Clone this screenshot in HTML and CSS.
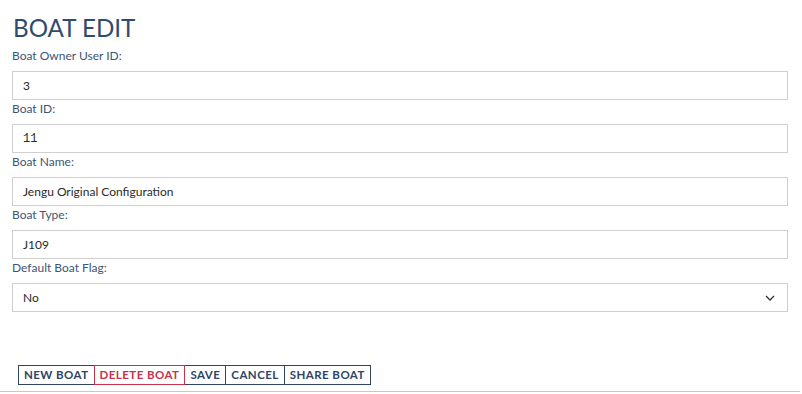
FILE: index.html
```html
<!DOCTYPE html>
<html>
<head>
<meta charset="utf-8">
<link rel="stylesheet" href="styles.css">
</head>
<body>
<div class="page">
  <h1 class="title">BOAT EDIT</h1>
  <form class="form">
    <label class="lbl">Boat Owner User ID:</label>
    <div class="field">3</div>
    <label class="lbl">Boat ID:</label>
    <div class="field mono">11</div>
    <label class="lbl">Boat Name:</label>
    <div class="field">Jengu Original Configuration</div>
    <label class="lbl">Boat Type:</label>
    <div class="field">J109</div>
    <label class="lbl">Default Boat Flag:</label>
    <div class="field select"><span>No</span>
      <svg class="chev" width="10" height="6" viewBox="0 0 10 6"><path d="M1 1 L5 5 L9 1" fill="none" stroke="#333" stroke-width="1.3"/></svg>
    </div>
  </form>
  <div class="actions">
    <button class="btn">NEW BOAT</button><button class="btn danger">DELETE BOAT</button><button class="btn">SAVE</button><button class="btn">CANCEL</button><button class="btn">SHARE BOAT</button>
  </div>
</div>
</body>
</html>
```
FILE: styles.css
```css
html, body { margin: 0; padding: 0; background: #fff; }
body { font-family: Lato, "Open Sans", sans-serif; }
.page { width: 802px; height: 394px; position: relative; box-sizing: border-box; }
.title {
  margin: 0; padding: 13px 0 0 13px;
  font-size: 24.2px; font-weight: 400; color: #2f4b6e; line-height: 30px;
}
.form { display: flex; flex-direction: column; padding: 0 14px 0 12px; margin-top: 4px; }
.lbl { font-size: 12px; color: #3d5575; line-height: 18px; height: 18px; margin-bottom: 6px; }
.field {
  height: 29px; box-sizing: border-box; border: 1px solid #cfcfcf;
  padding: 0 10px; display: flex; align-items: center;
  font-size: 12px; color: #2a2a2a; margin-bottom: 0;
}
.mono { font-family: "Liberation Mono", monospace; font-size: 12px; }
.select { justify-content: space-between; padding-right: 12px; }
.chev { display: block; }
.actions { display: flex; padding: 53px 0 6px 18px; border-bottom: 1px solid #c8c8c8; margin-right: 2px; }
.btn {
  font-family: Lato, sans-serif; font-weight: 700; font-size: 11.5px; letter-spacing: 0.45px;
  color: #2e4566; background: #fff; border: 1px solid #2e4566;
  height: 20px; padding: 0 5px; margin: 0 0 0 -1px; line-height: 18px;
}
.btn:first-child { margin-left: 0; }
.danger { color: #c8334a; border-color: #c8334a; position: relative; z-index: 1; }
```
